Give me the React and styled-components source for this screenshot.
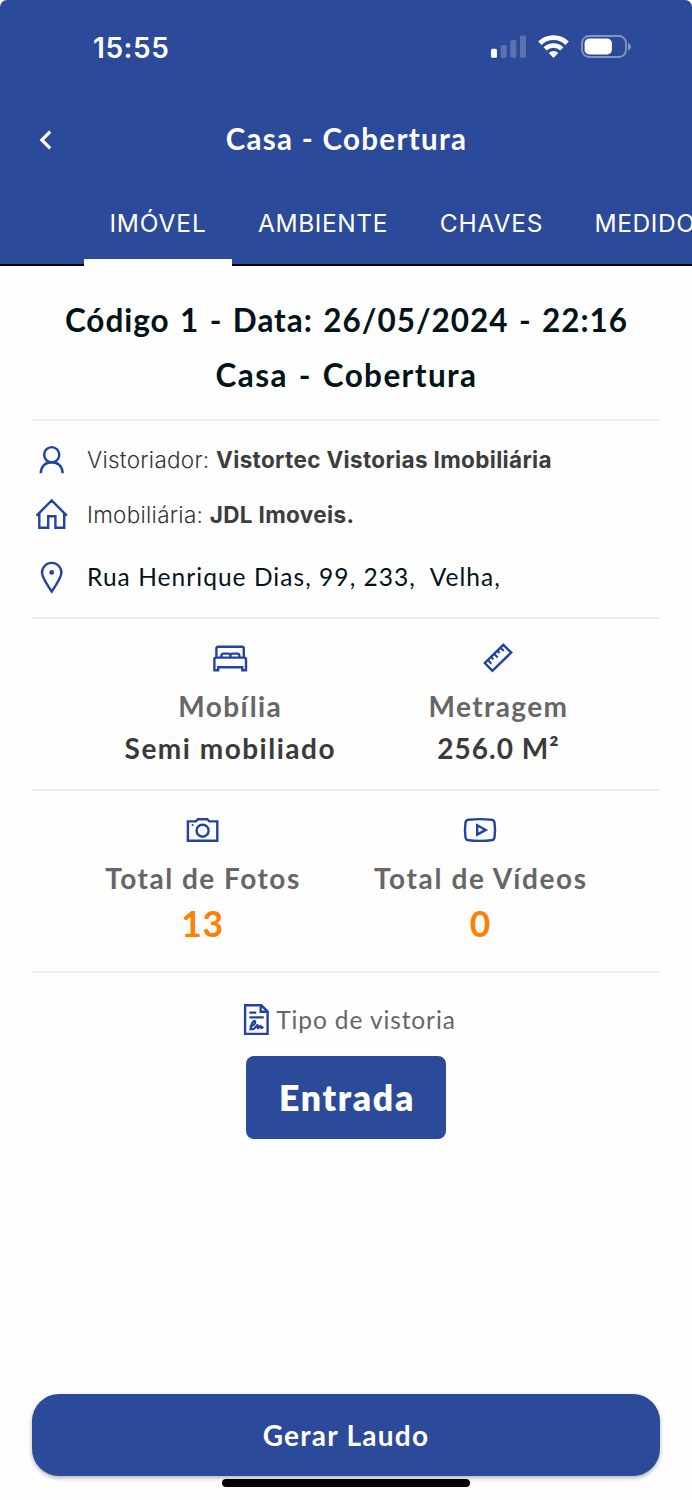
import styled, { createGlobalStyle } from 'styled-components';

const GlobalStyle = createGlobalStyle`
  :root {
    --color-primary: #2c4a9a;
    --color-icon: #2442a0;
    --color-accent: #ff8000;
    --color-ink: #021418;
    --font-display: Lato, 'Open Sans', sans-serif;
    --font-system: Inter, Roboto, sans-serif;
  }

  * {
    box-sizing: border-box;
  }

  body {
    margin: 0;
    background: white;
  }

  h1, h2, p, ul {
    margin: 0;
    padding: 0;
    font-weight: inherit;
  }
`;

const Screen = styled.div`
  display: flex;
  flex-direction: column;
  width: 692px;
  height: 1500px;
  overflow: hidden;
  background: #fefefe;
`;

const Header = styled.header`
  flex: none;
  color: white;
  background: var(--color-primary);
  border-radius: 7px 7px 0 0;
`;

const StatusBar = styled.div`
  display: flex;
  align-items: center;
  justify-content: space-between;
  height: 95px;
  padding: 0 61px 2px 93px;
`;

const Clock = styled.span`
  font-family: var(--font-system);
  font-size: 28px;
  font-weight: 600;
  line-height: 36px;
  letter-spacing: 0.55px;
  padding-top: 2px;
`;

const StatusIcons = styled.div`
  display: flex;
  align-items: center;

  svg + svg {
    margin-left: 12px;
  }
`;

const NavBar = styled.div`
  display: grid;
  grid-template-columns: 60px 1fr 60px;
  align-items: center;
  height: 87px;
`;

const BackButton = styled.button`
  display: flex;
  justify-content: flex-end;
  padding: 3px 8px 0 0;
  border: 0;
  color: inherit;
  background: none;
`;

const NavTitle = styled.h1`
  padding-left: 1px;
  font-family: var(--font-display);
  font-size: 29.5px;
  font-weight: 700;
  letter-spacing: 1.3px;
  text-align: center;
`;

const TabList = styled.nav`
  display: flex;
  height: 84px;
  padding-left: 84px;
  border-bottom: 2px solid black;
`;

const Tab = styled.a`
  flex: none;
  width: ${({ $width }) => $width}px;
  height: 84px;
  padding-top: 5px;
  border-bottom: 7px solid ${({ $active }) => ($active ? 'white' : 'transparent')};
  font-family: var(--font-system);
  font-size: 24.5px;
  line-height: 72px;
  letter-spacing: ${({ $spacing }) => $spacing}px;
  text-align: center;
`;

const Content = styled.main`
  padding: 27px 32px 0;
`;

const Heading = styled.h2`
  padding-left: 1px;
  font-family: var(--font-display);
  font-size: 31.5px;
  font-weight: 700;
  line-height: 55px;
  letter-spacing: ${({ $spacing }) => $spacing}px;
  word-spacing: 1.8px;
  text-align: center;
  white-space: nowrap;
  color: var(--color-ink);
`;

const Divider = styled.hr`
  height: 2px;
  margin: ${({ $top = 0, $bottom = 0 }) => `${$top}px 0 ${$bottom}px`};
  border: 0;
  background: #efefef;
`;

const InfoRow = styled.div`
  display: flex;
  align-items: center;
  gap: 15px;
  height: ${({ $height = 55 }) => $height}px;
`;

const InfoText = styled.p`
  font-family: var(--font-system);
  font-size: 22.5px;
  font-weight: 300;
  letter-spacing: 0.28px;
  white-space: pre;
  color: #333;

  strong {
    font-weight: 700;
    letter-spacing: 0.34px;
    color: #3c3c3c;
  }
`;

const Address = styled.p`
  font-family: var(--font-display);
  font-size: 24.5px;
  letter-spacing: 1.05px;
  white-space: pre;
  color: var(--color-ink);
`;

const Stats = styled.section`
  display: flex;
  justify-content: space-evenly;
  padding: 19px 0 ${({ $bottom }) => $bottom}px;
`;

const Stat = styled.div`
  display: flex;
  flex-direction: column;
  align-items: center;
  font-family: var(--font-display);
  font-size: 28px;
`;

const StatLabel = styled.p`
  margin-top: 8px;
  padding-left: 1px;
  font-weight: 700;
  line-height: 41px;
  letter-spacing: ${({ $spacing = 1.4 }) => $spacing}px;
  color: #666;
`;

const StatValue = styled.p`
  padding-left: 1px;
  font-weight: 700;
  line-height: 42px;
  letter-spacing: ${({ $spacing = 1.5 }) => $spacing}px;
  color: #3a3a3a;
`;

const StatCount = styled.p`
  font-size: 35.5px;
  font-weight: 700;
  line-height: 49px;
  letter-spacing: 0.7px;
  color: var(--color-accent);
`;

const Inspection = styled.section`
  display: flex;
  flex-direction: column;
  align-items: center;
  padding-top: 26px;
`;

const InspectionLabel = styled.div`
  display: flex;
  align-items: center;
  height: 40px;
  font-family: var(--font-display);
  font-size: 24.5px;
  letter-spacing: 0.9px;
  color: #666;
`;

const InspectionType = styled.div`
  width: 200px;
  height: 83px;
  margin-top: 17px;
  padding-left: 2px;
  border-radius: 8px;
  font-family: var(--font-display);
  font-size: 35.5px;
  font-weight: 800;
  line-height: 83px;
  letter-spacing: 1.7px;
  text-align: center;
  color: white;
  background: var(--color-primary);
`;

const Footer = styled.footer`
  display: flex;
  flex-direction: column;
  align-items: center;
  margin-top: auto;
  padding: 0 32px 13px;
`;

const PrimaryButton = styled.button`
  width: 100%;
  height: 82px;
  padding: 0 0 1px;
  border: 0;
  border-radius: 27px;
  font-family: var(--font-display);
  font-size: 28px;
  font-weight: 700;
  letter-spacing: 1.27px;
  color: white;
  background: var(--color-primary);
  box-shadow: 0 2px 4px rgba(0, 0, 0, 0.3);
`;

const HomeIndicator = styled.div`
  width: 248px;
  height: 8px;
  margin-top: 3px;
  border-radius: 4px;
  background: black;
`;

const LineIcon = styled.svg.attrs({ width: 40, height: 40, viewBox: '0 0 40 40' })`
  flex: none;
  fill: none;
  stroke: var(--color-icon);
  stroke-width: 2.4;
`;

const SignalIcon = () => (
  <svg width="35" height="23" viewBox="0 0 35 23" fill="white">
    <rect x="0" y="13.8" width="6" height="9" rx="1.6" />
    <g opacity="0.22">
      <rect x="9.7" y="10" width="6" height="12.8" rx="1.6" />
      <rect x="19.3" y="5" width="6" height="17.8" rx="1.6" />
      <rect x="29" y="0.4" width="6" height="22.4" rx="1.6" />
    </g>
  </svg>
);

const WifiIcon = () => (
  <svg width="31" height="23" viewBox="0 0 31 23" fill="none" stroke="white">
    <path d="M1.9 8.3a19.2 19.2 0 0 1 27.2 0" strokeWidth="4.8" />
    <path d="M7.1 13.9a11.9 11.9 0 0 1 16.8 0" strokeWidth="4.4" />
    <path d="M10.8 17.9a6.7 6.7 0 0 1 9.4 0l-4 4.3q-.7.7-1.4 0z" fill="white" stroke="none" />
  </svg>
);

const BatteryIcon = () => (
  <svg width="50" height="23" viewBox="0 0 50 23">
    <rect x="1" y="1" width="44" height="21" rx="7" fill="none" stroke="white" strokeWidth="1.8" opacity="0.42" />
    <rect x="3.6" y="3.6" width="27.3" height="15.8" rx="4.6" fill="white" />
    <path d="M47.2 7.8q2.6 1.3 2.6 3.9t-2.6 3.9z" fill="white" opacity="0.48" />
  </svg>
);

const ChevronIcon = () => (
  <svg width="13" height="20" viewBox="0 0 13 20" fill="none" stroke="white" strokeWidth="3.2">
    <path d="M11.2 1.6L2.8 10l8.4 8.4" />
  </svg>
);

const UserIcon = () => (
  <LineIcon>
    <circle cx="19.7" cy="14.7" r="7.6" />
    <path d="M8.8 33.2c0-6.8 4.6-11 10.9-11s10.9 4.2 10.9 11" />
  </LineIcon>
);

const HouseIcon = () => (
  <LineIcon>
    <path d="M4.6 20.6L19.7 5.5l15.1 15.1M7.3 18.6v14.1h8.9V21.3h7.2v11.4h8.8V18.6" />
  </LineIcon>
);

const PinIcon = () => (
  <LineIcon>
    <path d="M19.7 35.6C15.2 28.4 10 22 10 16.6a9.7 9.7 0 0 1 19.4 0c0 5.4-5.2 11.8-9.7 19z" />
    <circle cx="19.7" cy="16.4" r="1.2" />
  </LineIcon>
);

const BedIcon = () => (
  <LineIcon>
    <path d="M6.4 20v-9.2q0-2 2-2h23.4q2 0 2 2V20" />
    <path d="M11.4 19.6v-1.8q0-2.2 2.2-2.2h4.6q2.2 0 2.2 2.2v1.8M20.4 17.8q0-2.2 2.2-2.2h4.6q2.2 0 2.2 2.2v1.8" />
    <path d="M4.4 32.2v-11q0-1.6 1.6-1.6h28.4q1.6 0 1.6 1.6v11h-3.7v-2.9H8.2v2.9z" />
  </LineIcon>
);

const RulerIcon = () => (
  <LineIcon>
    <path d="M25.4 6.8l7.8 7.8-18.8 18.2L6.8 25z" />
    <path d="M9.8 22.1l3.6 3.6M13 18.9l2.4 2.4M16.1 15.8l3.6 3.6M19.3 12.7l2.4 2.4M22.4 9.6l3.4 3.4" strokeWidth="2.1" />
  </LineIcon>
);

const CameraIcon = () => (
  <LineIcon>
    <path d="M4.9 30.7V11.4h8l2.1-2.2h9.2l2.1 2.2h8v19.3z" />
    <circle cx="19.6" cy="20.7" r="6" />
    <circle cx="9.6" cy="15" r="0.5" strokeWidth="1.2" />
  </LineIcon>
);

const VideoIcon = () => (
  <LineIcon>
    <path d="M8.3 9.8q11.7-1.4 23.4 0 2.4.3 2.8 2.8 1.1 7.4 0 14.8-.4 2.5-2.8 2.8-11.7 1.4-23.4 0-2.4-.3-2.8-2.8-1.1-7.4 0-14.8.4-2.5 2.8-2.8z" />
    <path d="M17.2 15.2v9.4l8.5-4.7z" />
  </LineIcon>
);

const ContractIcon = () => (
  <LineIcon>
    <path d="M9.1 6.3h16.2l6.3 6.3v22.3H9.1z" />
    <path d="M24.7 6.5v6.3h6.6M13.3 13.6h7M13.3 18.4h14.4" />
    <path d="M13.6 27.6c3.6-.6 6.4-3.2 5.5-5.2-.9-1.6-3.4 1-3.8 4.2-.4 3.1.6 4.1 2.2 3.5 1.9-.8 2.7-3.6 3.9-4 1 .1-.4 3.1.5 3.4.9.1 1.7-2.6 2.7-2.6.8.3-.1 2 .8 2.2.7.1 1.2-.7 1.9-1.5M13.3 30.2h3.4" strokeWidth="2.1" />
  </LineIcon>
);

const App = () => {
  return (
    <>
      <GlobalStyle />
      <Screen>
        <Header>
          <StatusBar>
            <Clock>15:55</Clock>
            <StatusIcons>
              <SignalIcon />
              <WifiIcon />
              <BatteryIcon />
            </StatusIcons>
          </StatusBar>
          <NavBar>
            <BackButton aria-label="Voltar">
              <ChevronIcon />
            </BackButton>
            <NavTitle>Casa - Cobertura</NavTitle>
          </NavBar>
          <TabList>
            <Tab $width={148} $spacing={0.85} $active>IMÓVEL</Tab>
            <Tab $width={182} $spacing={0.6}>AMBIENTE</Tab>
            <Tab $width={155} $spacing={0.8}>CHAVES</Tab>
            <Tab $width={200} $spacing={0.6}>MEDIDORES</Tab>
          </TabList>
        </Header>

        <Content>
          <Heading $spacing={0.97}>Código 1 - Data: 26/05/2024 - 22:16</Heading>
          <Heading $spacing={1.4}>Casa - Cobertura</Heading>
          <Divider $top={16} $bottom={11} />

          <InfoRow>
            <UserIcon />
            <InfoText>
              Vistoriador: <strong>Vistortec Vistorias Imobiliária</strong>
            </InfoText>
          </InfoRow>
          <InfoRow>
            <HouseIcon />
            <InfoText>
              Imobiliária: <strong>JDL Imoveis.</strong>
            </InfoText>
          </InfoRow>
          <InfoRow $height={68}>
            <PinIcon />
            <Address>Rua Henrique Dias, 99, 233,{'  '}Velha,</Address>
          </InfoRow>
          <Divider $top={7} />

          <Stats $bottom={20}>
            <Stat>
              <BedIcon />
              <StatLabel>Mobília</StatLabel>
              <StatValue>Semi mobiliado</StatValue>
            </Stat>
            <Stat>
              <RulerIcon />
              <StatLabel>Metragem</StatLabel>
              <StatValue $spacing={1.02}>256.0 M²</StatValue>
            </Stat>
          </Stats>
          <Divider />

          <Stats $bottom={23}>
            <Stat>
              <CameraIcon />
              <StatLabel $spacing={1.5}>Total de Fotos</StatLabel>
              <StatCount>13</StatCount>
            </Stat>
            <Stat>
              <VideoIcon />
              <StatLabel $spacing={1.62}>Total de Vídeos</StatLabel>
              <StatCount>0</StatCount>
            </Stat>
          </Stats>
          <Divider />

          <Inspection>
            <InspectionLabel>
              <ContractIcon />
              Tipo de vistoria
            </InspectionLabel>
            <InspectionType>Entrada</InspectionType>
          </Inspection>
        </Content>

        <Footer>
          <PrimaryButton>Gerar Laudo</PrimaryButton>
          <HomeIndicator />
        </Footer>
      </Screen>
    </>
  );
};

export default App;
